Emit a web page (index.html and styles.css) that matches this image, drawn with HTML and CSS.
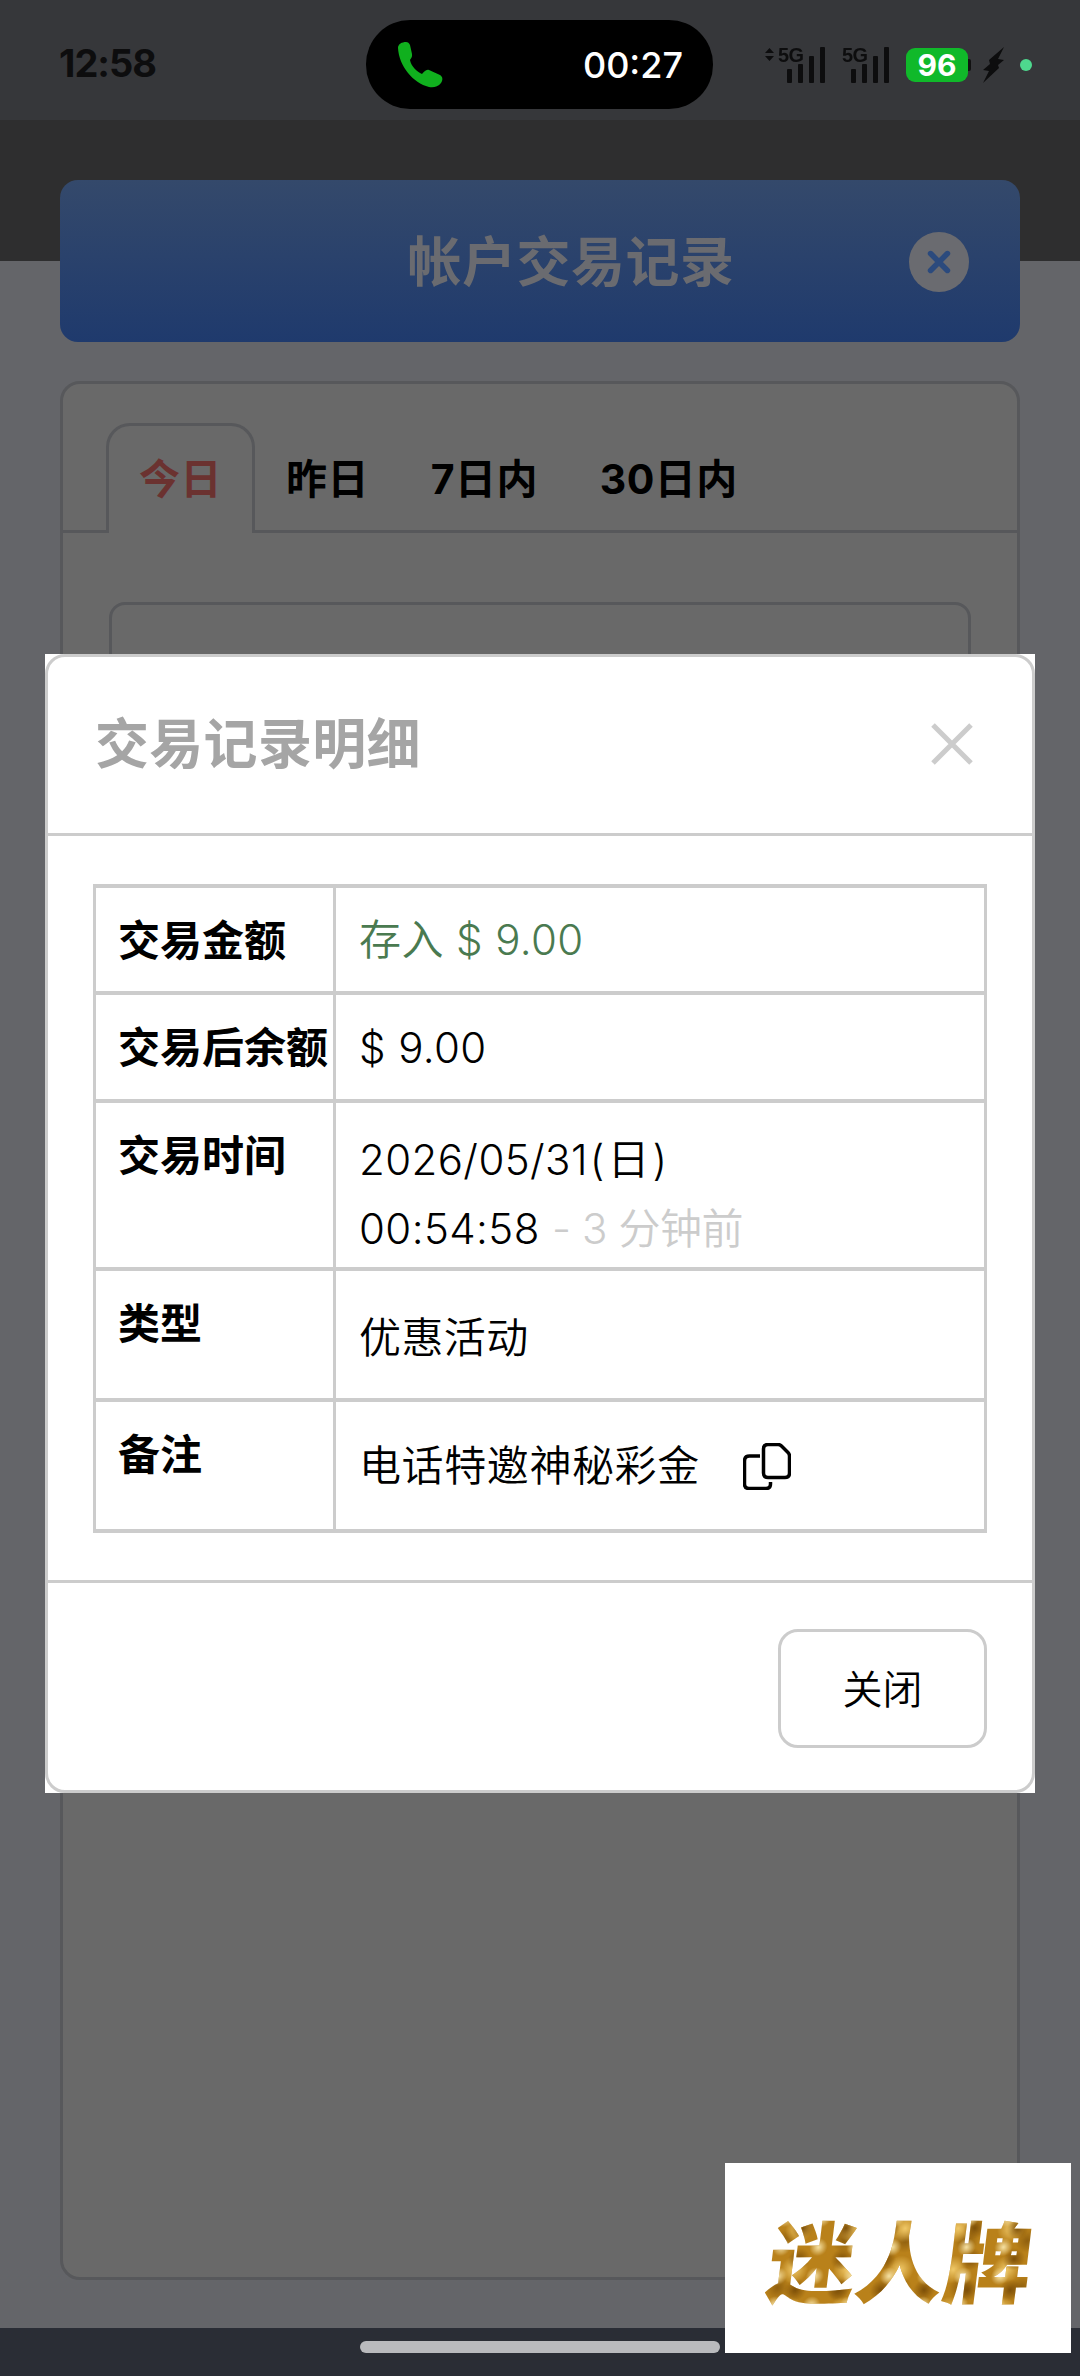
FILE: index.html
```html
<!DOCTYPE html>
<html lang="zh-CN">
<head>
    <meta charset="UTF-8">
    <meta name="viewport" content="width=device-width, initial-scale=1.0">
    <title>交易记录明细</title>
    <link rel="stylesheet" href="styles.css">
</head>
<body>
    <div class="phone">
        <div class="status-bar">
            <span class="clock">12:58</span>
            <div class="island">
                <svg class="call-icon" viewBox="0 0 46 46">
                    <path d="M1 6C1 2 5 0 9 0c2 0 3 1 4 3l2 9c.5 3-1 4-2 6 1 6 7 12 12 14 2-2 4-5 7-4l11 5c3 2 3 5 1 8-3 4-8 5-12 4C16 41 2 24 1 6z"/>
                </svg>
                <span class="call-time">00:27</span>
            </div>
            <div class="status-icons">
                <div class="signal signal-first">
                    <svg class="updown" viewBox="0 0 9 13"><path d="M4.500 0L9 5H0zM0 8h9l-4.500 5z"/></svg>
                    <span class="net">5G</span>
                    <div class="bars"><i class="b1"></i><i class="b2"></i><i class="b3"></i><i class="b4"></i></div>
                </div>
                <div class="signal">
                    <span class="net">5G</span>
                    <div class="bars"><i class="b1"></i><i class="b2"></i><i class="b3"></i><i class="b4"></i></div>
                </div>
                <div class="battery"><span>96</span></div>
                <svg class="bolt" viewBox="0 0 21 36"><path d="M21 0L6 13l1 4-7 6 6 1-6 12 16-15-1-3 6-5-6-1z"/></svg>
                <span class="dot"></span>
            </div>
        </div>

        <div class="page">
            <div class="page-title">
                <h1>帐户交易记录</h1>
                <span class="title-close">
                    <svg viewBox="0 0 20 20"><path d="M4 4l12 12M16 4L4 16"/></svg>
                </span>
            </div>
            <div class="card">
                <div class="tabs">
                    <span class="tab active">今日</span>
                    <span class="tab">昨日</span>
                    <span class="tab">7日内</span>
                    <span class="tab">30日内</span>
                </div>
                <div class="inner-box"></div>
            </div>
        </div>

        <div class="nav-bar"><span class="home-indicator"></span></div>

        <!-- detail dialog over the page -->
        <div class="modal">
            <div class="modal-box">
                <div class="modal-head">
                    <h2>交易记录明细</h2>
                    <svg class="modal-x" viewBox="0 0 42 42"><path d="M2 2l38 38M40 2L2 40"/></svg>
                </div>
                <div class="modal-body">
                    <table class="detail">
                        <tr class="row-a">
                            <th>交易金额</th>
                            <td class="green">存入 $ 9.00</td>
                        </tr>
                        <tr class="row-b">
                            <th>交易后余额</th>
                            <td>$ 9.00</td>
                        </tr>
                        <tr class="row-c">
                            <th>交易时间</th>
                            <td class="time-cell">2026/05/31<span class="day">(日)</span><br>00:54:58 <span class="muted">- 3 分钟前</span></td>
                        </tr>
                        <tr class="row-d">
                            <th>类型</th>
                            <td>优惠活动</td>
                        </tr>
                        <tr class="row-d">
                            <th>备注</th>
                            <td>
                                <div class="note">
                                    <span class="note-text">电话特邀神秘彩金</span>
                                    <svg class="copy-icon" viewBox="0 0 48 47">
                                        <path d="M17 13H6.500C3 13 1.500 15 1.500 18v23c0 3 1.500 4.500 4.500 4.500h17c3 0 4.500-1.500 4.500-4.500v-2"/>
                                        <path d="M25 1.500h10c1.500 0 2.500.5 3.500 1.500l6.500 6.500c1 1 1.500 2 1.500 3.500v17c0 3-1.500 4.500-4.500 4.500H25c-3 0-4.500-1.500-4.500-4.500V6c0-3 1.500-4.500 4.500-4.500z"/>
                                    </svg>
                                </div>
                            </td>
                        </tr>
                    </table>
                </div>
                <div class="modal-foot">
                    <button class="close-btn">关闭</button>
                </div>
            </div>
        </div>

        <div class="brand"><span class="brand-text">迷人牌</span></div>
    </div>
</body>
</html>
```

FILE: styles.css
```css
* {
    box-sizing: border-box;
}

body {
    margin: 0;
    font-family: Inter, "Noto Sans CJK SC", sans-serif;
    color: #000;
}

.phone {
    position: relative;
    display: flex;
    flex-direction: column;
    width: 1080px;
    height: 2376px;
    background-color: #646569;
    overflow: hidden;
}

/* status bar */
.status-bar {
    position: relative;
    display: flex;
    align-items: center;
    height: 120px;
    padding: 9px 48px 0 59px;
    background-color: #36373a;
    flex-shrink: 0;
}

.clock {
    font-size: 38px;
    font-weight: 700;
    color: #0d0d0e;
    letter-spacing: -1px;
    margin-top: -3px;
}

.island {
    display: flex;
    align-items: center;
    justify-content: space-between;
    width: 347px;
    height: 89px;
    margin-left: 210px;
    padding: 0 30px 0 31px;
    background-color: #000;
    border-radius: 44px;
}

.call-icon {
    width: 46px;
    height: 46px;
    fill: #10b01e;
}

.call-time {
    font-size: 36px;
    font-weight: 500;
    color: #fff;
}

.status-icons {
    display: flex;
    align-items: center;
    margin-left: auto;
    height: 60px;
}

.signal {
    position: relative;
    width: 47px;
    height: 36px;
    margin-right: 17px;
}

.signal-first {
    width: 60px;
    margin-right: 17px;
}

.updown {
    position: absolute;
    left: 0;
    top: 1px;
    width: 9px;
    height: 13px;
    fill: #0d0d0e;
}

.net {
    position: absolute;
    left: 0;
    top: -4px;
    font-family: "Liberation Sans", sans-serif;
    font-size: 21px;
    font-weight: 700;
    letter-spacing: -0.5px;
    color: #0d0d0e;
    transform: scaleX(0.95);
    transform-origin: left top;
}

.signal-first .net {
    left: 13px;
}

.bars {
    position: absolute;
    right: 0;
    bottom: 0;
    display: flex;
    align-items: flex-end;
    gap: 6px;
}

.bars i {
    display: block;
    width: 5px;
    background-color: #0d0d0e;
    border-radius: 1px;
}

.bars .b1 { height: 14px; }
.bars .b2 { height: 19px; }
.bars .b3 { height: 27px; }
.bars .b4 { height: 36px; }

.battery {
    position: relative;
    display: flex;
    align-items: center;
    justify-content: center;
    width: 62px;
    height: 34px;
    background-color: #10b92a;
    border-radius: 9px;
    margin-right: 15px;
    font-size: 30px;
    font-weight: 700;
    color: #fff;
}

/* battery nub */
.battery::after {
    content: "";
    position: absolute;
    right: -3px;
    top: 11px;
    width: 3px;
    height: 12px;
    background-color: #111;
    border-radius: 0 2px 2px 0;
}

.bolt {
    width: 21px;
    height: 36px;
    fill: #0d0d0e;
    margin-right: 16px;
}

.dot {
    width: 12px;
    height: 12px;
    background-color: #4ed98e;
    border-radius: 50%;
}

/* page behind the dialog */
.page {
    flex: 1;
    padding: 60px 60px 0;
    background: linear-gradient(#2e2e2f 141px, #646569 141px);
}

.page-title {
    position: relative;
    display: flex;
    align-items: center;
    justify-content: center;
    height: 162px;
    padding-left: 62px;
    background: linear-gradient(#34496b, #1f3a6d);
    border-radius: 18px;
}

.page-title h1 {
    margin: 0;
    font-size: 54px;
    font-weight: 700;
    color: #6a6b70;
    letter-spacing: 0.5px;
    transform: translateY(-3px);
}

.title-close {
    position: absolute;
    right: 51px;
    top: 52px;
    display: flex;
    align-items: center;
    justify-content: center;
    width: 60px;
    height: 60px;
    background-color: #6a6b70;
    border-radius: 50%;
}

.title-close svg {
    width: 28px;
    height: 28px;
    fill: none;
    stroke: #2b4a7d;
    stroke-width: 4;
    stroke-linecap: round;
}

.card {
    height: 1899px;
    margin-top: 39px;
    background-color: #696969;
    border: 3px solid #57585b;
    border-radius: 20px;
}

.tabs {
    display: flex;
    height: 149px;
    padding: 39px 0 0 43px;
    border-bottom: 3px solid #57585b;
}

.tab {
    height: 110px;
    padding: 0 31px;
    font-size: 41px;
    font-weight: 700;
    line-height: 113px;
    letter-spacing: 0.4px;
    white-space: nowrap;
}

.tab.active {
    width: 149px;
    padding: 0 30px;
    border: 3px solid #57585b;
    border-bottom: none;
    border-radius: 24px 24px 0 0;
    background-color: #696969;
    color: #6b3230;
    line-height: 107px;
}

.inner-box {
    height: 600px;
    margin: 69px 46px 0;
    border: 3px solid #57585b;
    border-radius: 16px;
}

/* bottom nav */
.nav-bar {
    display: flex;
    justify-content: center;
    height: 48px;
    padding-top: 13px;
    background-color: #2a2d35;
    flex-shrink: 0;
}

.home-indicator {
    width: 360px;
    height: 12px;
    background-color: #b9babd;
    border-radius: 6px;
}

/* dialog */
.modal {
    position: absolute;
    left: 45px;
    top: 654px;
    width: 990px;
    height: 1139px;
    background-color: #fff;
}

.modal-box {
    display: flex;
    flex-direction: column;
    height: 100%;
    border: 3px solid #ccc;
    border-radius: 20px;
}

.modal-head {
    display: flex;
    align-items: center;
    justify-content: space-between;
    height: 179px;
    padding: 0 59px 0 47px;
    border-bottom: 3px solid #ccc;
}

.modal-head h2 {
    margin: 0;
    font-size: 54px;
    font-weight: 700;
    color: #a5a5a5;
    letter-spacing: 0.3px;
    transform: translateY(-5px);
}

.modal-x {
    width: 42px;
    height: 42px;
    fill: none;
    stroke: #ccc;
    stroke-width: 5;
    transform: translateY(-1px);
}

.modal-body {
    height: 747px;
    padding: 48px 29px 0 45px;
    border-bottom: 3px solid #ccc;
}

.detail {
    width: 894px;
    table-layout: fixed;
    border-collapse: collapse;
    border: 3px solid #ccc;
    font-size: 42px;
    font-weight: 350;
    letter-spacing: 0.4px;
}

.detail th,
.detail td {
    border: solid #ccc;
    border-width: 4px 3px;
    padding: 0;
}

.detail th {
    width: 240px;
    padding: 26px 0 0 22px;
    font-weight: 700;
    line-height: 54px;
    text-align: left;
    vertical-align: top;
    white-space: nowrap;
    letter-spacing: 0;
}

.detail td {
    padding-left: 23px;
    vertical-align: middle;
}

.row-a { height: 107px; }
.row-b { height: 108px; }
.row-c { height: 168px; }
.row-d { height: 131px; }

.detail .green {
    padding-bottom: 6px;
}

.detail .time-cell {
    padding-top: 22px;
    line-height: 69px;
    vertical-align: top;
}

.day {
    letter-spacing: 3px;
    margin-left: 2px;
}

.green { color: #4a7a50; }
.muted { color: #ccc; letter-spacing: -0.4px; }

.note {
    display: flex;
    align-items: center;
    gap: 43px;
    letter-spacing: 0.6px;
}

.note-text {
    transform: translateY(-3px);
}

.copy-icon {
    width: 48px;
    height: 47px;
    fill: none;
    stroke: #000;
    stroke-width: 3.5;
    margin-top: 2px;
}

.modal-foot {
    display: flex;
    justify-content: flex-end;
    align-items: flex-start;
    padding: 46px 45px 0 0;
}

.close-btn {
    width: 209px;
    height: 119px;
    padding-bottom: 4px;
    background-color: #fff;
    border: 3px solid #ccc;
    border-radius: 20px;
    font-family: inherit;
    font-size: 40px;
    font-weight: 350;
    color: #000;
}

/* floating logo */
.brand {
    position: absolute;
    left: 725px;
    top: 2163px;
    display: flex;
    align-items: center;
    justify-content: center;
    width: 346px;
    height: 190px;
    background-color: #fff;
}

.brand-text {
    font-family: "Noto Sans CJK SC", sans-serif;
    font-size: 88px;
    font-weight: 900;
    line-height: 100px;
    white-space: nowrap;
    color: transparent;
    background-color: #b9811a;
    background-image:
        radial-gradient(circle at 30% 35%, #f7e3a6 0, transparent 9px),
        radial-gradient(circle at 70% 65%, #7d4f08 0, transparent 11px),
        radial-gradient(circle at 50% 50%, #f0c969 0, transparent 14px),
        radial-gradient(circle at 20% 70%, #8f5f0e 0, transparent 12px);
    background-size: 37px 29px, 43px 31px, 53px 41px, 61px 47px;
    -webkit-background-clip: text;
    background-clip: text;
    transform: skewX(-7deg) translateX(3px);
}
```
